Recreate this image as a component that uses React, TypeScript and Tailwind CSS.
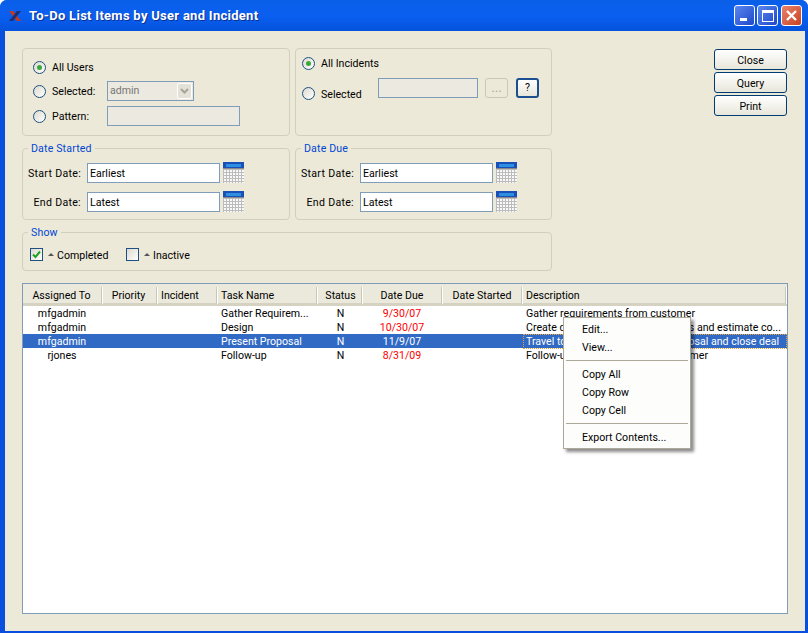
import type { ReactNode } from "react";

const font = "font-['Roboto','Liberation_Sans',sans-serif]";

function Radio({ on }: { on?: boolean }) {
  return (
    <span className="flex h-[13px] w-[13px] shrink-0 items-center justify-center rounded-full border border-[#1c5180] bg-gradient-to-br from-[#dcd9ce] to-white">
      {on && <span className="h-[5px] w-[5px] rounded-full bg-[#3aa83a]" />}
    </span>
  );
}

function Group({ title, className, children }: { title?: string; className: string; children: ReactNode }) {
  return (
    <div className={`relative rounded-[4px] border border-[#d0d0bf] ${className}`}>
      {title && <span className="absolute -top-[8px] left-[5px] bg-[#ece9d8] px-[3px] pt-px leading-[14px] tracking-[0.15px] text-[#0046d5]">{title}</span>}
      {children}
    </div>
  );
}

function Calendar() {
  const cells = [];
  for (let y = 8; y < 21; y += 3) {
    for (let x = 1; x < 20; x += 3) {
      cells.push(<rect key={`${x}-${y}`} x={x} y={y} width="2" height="2" fill="#f8f8f8" />);
    }
  }
  return (
    <svg width="21" height="21" viewBox="0 0 21 21" className="shrink-0">
      <rect width="21" height="21" fill="#bcbcbc" />
      <rect x="0" y="0" width="21" height="7" fill="#1a4fb8" />
      <rect x="3" y="2" width="15" height="3" fill="#2d8fe0" />
      <rect x="0" y="6" width="21" height="1" fill="#8a8a8a" />
      {cells}
    </svg>
  );
}

function DateRow({ label, value }: { label: string; value: string }) {
  return (
    <div className="flex h-[21px] items-center">
      <span className="w-[64px] shrink-0 pr-[6px] pt-[3px] text-right tracking-[0.3px]">{label}</span>
      <span className="flex h-[20px] w-[133px] items-center border border-[#7f9db9] bg-white pl-[2px] pt-[3px]">{value}</span>
      <span className="ml-[3px]"><Calendar /></span>
    </div>
  );
}

function XpButton({ label }: { label: string }) {
  return (
    <button className="h-[21px] w-[73px] rounded-[3px] border border-[#003c74] bg-gradient-to-b from-white to-[#e8e6da] pt-px text-center text-[10.6px] leading-[17px] text-black">
      {label}
    </button>
  );
}

function CheckLabel({ label, checked, className }: { label: string; checked?: boolean; className: string }) {
  return (
    <div className={`flex items-center ${className}`}>
      <span className="flex h-[13px] w-[13px] items-center justify-center border border-[#1c5180] bg-gradient-to-br from-[#dcd9ce] to-white">
        {checked && (
          <svg width="9" height="9" viewBox="0 0 9 9">
            <path d="M1 4.5 L3.5 7 L8 1.5" fill="none" stroke="#21a121" strokeWidth="2" />
          </svg>
        )}
      </span>
      <svg width="6" height="6" viewBox="0 0 6 6" className="ml-[5px] mr-[3px]">
        <path d="M0 4 L3 1 L6 4 Z" fill="#555" />
      </svg>
      <span className="pt-[3px]">{label}</span>
    </div>
  );
}

const columns = "grid grid-cols-[80px_55px_60px_100px_45px_80px_80px_1fr]";

const headers = [
  { label: "Assigned To", cls: "pr-[3px] text-center" },
  { label: "Priority", cls: "pr-[4px] text-center" },
  { label: "Incident", cls: "pl-[3px]" },
  { label: "Task Name", cls: "pl-[3px]" },
  { label: "Status", cls: "text-center" },
  { label: "Date Due", cls: "pr-[2px] text-center" },
  { label: "Date Started", cls: "pr-[2px] text-center" },
  { label: "Description", cls: "pl-[3px]" },
];

const rows = [
  { who: "mfgadmin", task: "Gather Requirem...", due: "9/30/07", desc: "Gather requirements from customer" },
  { who: "mfgadmin", task: "Design", due: "10/30/07", desc: "Create detailed designs for services and estimate co..." },
  { who: "mfgadmin", task: "Present Proposal", due: "11/9/07", desc: "Travel to client site to present proposal and close deal", selected: true },
  { who: "rjones", task: "Follow-up", due: "8/31/09", desc: "Follow-up on proposals from customer" },
];

function MenuItem({ label }: { label: string }) {
  return <div className="h-[18px] pl-[18px] pt-px leading-[18px]">{label}</div>;
}

function MenuSep() {
  return (
    <div className="flex h-[9px] items-center px-[2px]">
      <div className="h-px w-full bg-[#aca899]" />
    </div>
  );
}

export default function App() {
  return (
    <div className={`${font} flex h-[633px] w-[808px] flex-col overflow-hidden rounded-t-[7px] bg-[#0a4ee0] text-[10.6px] leading-[14px] text-black`}>
      <div className="flex h-[31px] shrink-0 items-center bg-gradient-to-b from-[#0a5fe8] via-[#0a5ff0] to-[#0552dc] pl-[8px] pr-[6px]">
        <svg width="14" height="14" viewBox="0 0 14 14">
          <path d="M1 2 H5 L13 12 H9 Z" fill="#c8371d" />
          <path d="M13 2 H9 L1 12 H5 Z" fill="#1b2f72" />
        </svg>
        <span className="ml-[7px] text-[13px] font-bold tracking-[0.28px] text-white [text-shadow:1px_1px_#0f2f8f]">To-Do List Items by User and Incident</span>
        <div className="ml-auto flex gap-[2px]">
          <span className="flex h-[21px] w-[21px] items-end rounded-[3px] border border-white bg-gradient-to-br from-[#5b86f0] to-[#1f47c8] pb-[4px] pl-[5px]">
            <span className="h-[3px] w-[7px] bg-white" />
          </span>
          <span className="flex h-[21px] w-[21px] items-center justify-center rounded-[3px] border border-white bg-gradient-to-br from-[#5b86f0] to-[#1f47c8]">
            <span className="h-[12px] w-[12px] border border-t-[3px] border-white" />
          </span>
          <span className="ml-[1px] flex h-[21px] w-[21px] items-center justify-center rounded-[3px] border border-white bg-gradient-to-br from-[#e8836a] to-[#c8401c]">
            <svg width="13" height="13" viewBox="0 0 13 13">
              <path d="M2 2 L11 11 M11 2 L2 11" stroke="#fff" strokeWidth="2.4" />
            </svg>
          </span>
        </div>
      </div>

      <div className="ml-[5px] mr-[3px] flex h-[600px] w-[800px] shrink-0 flex-col bg-[#ece9d8] pl-[17px] pr-[17px] pt-[17px]">
        <div className="flex">
          <div className="flex w-[530px] flex-col gap-[12px]">
            <div className="grid grid-cols-[268px_257px] gap-[5px]">
              <Group className="h-[88px] pl-[10px] pt-[10px]">
                <div className="flex h-[16px] items-center gap-[6px]"><Radio on /><span className="pt-px">All Users</span></div>
                <div className="mt-[6px] flex h-[20px] items-center gap-[6px]">
                  <Radio /><span className="w-[49px] pt-px">Selected:</span>
                  <span className="flex h-[20px] w-[87px] items-center justify-between border border-[#7f9db9] bg-[#ebe9e0] pl-[2px] text-[#777]">
                    admin
                    <span className="mr-px flex h-[16px] w-[15px] items-center justify-center rounded-[2px] border border-white bg-[#e4e2d8]">
                      <svg width="9" height="6" viewBox="0 0 9 6"><path d="M1 1 L4.5 4.5 L8 1" fill="none" stroke="#a5a598" strokeWidth="2" /></svg>
                    </span>
                  </span>
                </div>
                <div className="mt-[5px] flex h-[20px] items-center gap-[6px]">
                  <Radio /><span className="w-[49px] pt-px">Pattern:</span>
                  <span className="h-[20px] w-[133px] border border-[#7f9db9] bg-[#ebe9e0]" />
                </div>
              </Group>
              <Group className="h-[88px] pl-[6px] pt-[6px]">
                <div className="flex h-[16px] items-center gap-[6px]"><Radio on /><span className="pt-px">All Incidents</span></div>
                <div className="mt-[7px] flex h-[20px] items-start">
                  <span className="mt-[9px]"><Radio /></span>
                  <span className="ml-[6px] mt-[10px] w-[57px]">Selected</span>
                  <span className="h-[20px] w-[100px] border border-[#7f9db9] bg-[#ebe9e0]" />
                  <span className="ml-[7px] flex h-[20px] w-[23px] items-center justify-center rounded-[3px] border border-[#c9c7ba] text-[13px] text-[#a5a598]">...</span>
                  <span className="ml-[8px] flex h-[20px] w-[23px] items-center justify-center rounded-[3px] border-2 border-[#1c4f8f] bg-gradient-to-b from-white to-[#e8e6da]">?</span>
                </div>
              </Group>
            </div>
            <div className="grid grid-cols-[268px_257px] gap-[5px]">
              <Group title="Date Started" className="flex h-[72px] flex-col gap-[8px] pt-[13px]">
                <DateRow label="Start Date:" value="Earliest" />
                <DateRow label="End Date:" value="Latest" />
              </Group>
              <Group title="Date Due" className="flex h-[72px] flex-col gap-[8px] pt-[13px]">
                <DateRow label="Start Date:" value="Earliest" />
                <DateRow label="End Date:" value="Latest" />
              </Group>
            </div>
            <Group title="Show" className="flex h-[39px] items-center pl-[7px] pt-[6px]">
              <CheckLabel label="Completed" checked className="w-[96px]" />
              <CheckLabel label="Inactive" className="w-[80px]" />
            </Group>
          </div>
          <div className="ml-[162px] mt-px flex flex-col gap-[2px]">
            <XpButton label="Close" />
            <XpButton label="Query" />
            <XpButton label="Print" />
          </div>
        </div>

        <div className="relative mt-[12px] h-[331px] w-[766px] border border-[#7f9db9] bg-white">
          <div className={`${columns} h-[22px] border-b-[3px] border-[#d6d2c2] bg-[#ebe9db] pt-px leading-[21px]`}>
            {headers.map((h) => (
              <div key={h.label} className={`relative ${h.cls}`}>
                {h.label}
                <span className="absolute bottom-[2px] right-0 top-[2px] w-[2px] border-l border-r border-l-[#cbc7b8] border-r-white" />
              </div>
            ))}
          </div>
          {rows.map((r) => (
            <div key={r.task} className={`${columns} h-[14px] whitespace-nowrap pt-px leading-[14px] ${r.selected ? "bg-[#316ac5] text-white" : ""}`}>
              <div className="pr-[2px] text-center">{r.who}</div>
              <div />
              <div />
              <div className="overflow-hidden pl-[3px]">{r.task}</div>
              <div className="text-center">N</div>
              <div className={`pr-[2px] text-center ${r.selected ? "" : "text-[#ff0000]"}`}>{r.due}</div>
              <div />
              <div className={`-mt-px overflow-hidden pl-[3px] pt-px ${r.selected ? "outline-1 -outline-offset-1 outline-dotted outline-[#e8a33d]" : ""}`}>{r.desc}</div>
            </div>
          ))}
          <div className="absolute left-[540px] top-[33px] h-[132px] w-[128px] border border-[#aca899] bg-[#fdfdfb] pt-[2px] shadow-[3px_3px_3px_rgba(0,0,0,0.45)]">
            <MenuItem label="Edit..." />
            <MenuItem label="View..." />
            <MenuSep />
            <MenuItem label="Copy All" />
            <MenuItem label="Copy Row" />
            <MenuItem label="Copy Cell" />
            <MenuSep />
            <MenuItem label="Export Contents..." />
          </div>
        </div>
      </div>
    </div>
  );
}
